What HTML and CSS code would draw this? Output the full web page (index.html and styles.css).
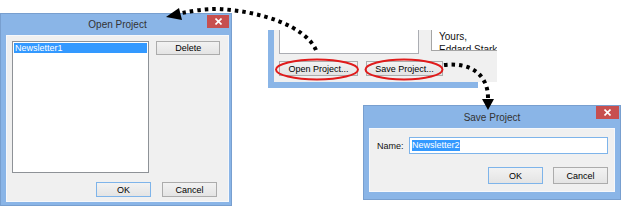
FILE: index.html
```html
<!DOCTYPE html>
<html>
<head>
<meta charset="utf-8">
<link rel="stylesheet" href="styles.css">
</head>
<body>
<div class="canvas">
  <section class="win win-open">
    <div class="titlebar">
      <span class="title">Open Project</span>
      <span class="close"><svg width="7" height="7" viewBox="0 0 7 7"><path d="M0.5 0.5 L6.5 6.5 M6.5 0.5 L0.5 6.5" stroke="#fff" stroke-width="1.6"/></svg></span>
    </div>
    <div class="client client-open">
      <div class="top-row">
        <div class="listbox"><div class="item selected">Newsletter1</div></div>
        <button class="btn btn-delete">Delete</button>
      </div>
      <div class="btn-row">
        <button class="btn btn-default">OK</button>
        <button class="btn">Cancel</button>
      </div>
    </div>
  </section>

  <section class="main-frag">
    <div class="frag-client">
      <div class="frag-top">
        <div class="frag-panel"></div>
        <div class="frag-letter">
          <div>Yours,</div>
          <div>Eddard Stark</div>
        </div>
      </div>
      <div class="frag-buttons">
        <button class="btn btn-open">Open Project...</button>
        <button class="btn btn-save">Save Project...</button>
      </div>
    </div>
  </section>

  <section class="win win-save">
    <div class="titlebar">
      <span class="title">Save Project</span>
      <span class="close"><svg width="7" height="7" viewBox="0 0 7 7"><path d="M0.5 0.5 L6.5 6.5 M6.5 0.5 L0.5 6.5" stroke="#fff" stroke-width="1.6"/></svg></span>
    </div>
    <div class="client client-save">
      <div class="name-row">
        <label class="name-label">Name:</label>
        <div class="textbox"><span class="sel-text">Newsletter2</span></div>
      </div>
      <div class="btn-row">
        <button class="btn btn-default">OK</button>
        <button class="btn">Cancel</button>
      </div>
    </div>
  </section>

  <svg class="overlay" width="624" height="210" viewBox="0 0 624 210">
    <ellipse cx="317" cy="69.5" rx="41" ry="10" fill="none" stroke="#e01b1b" stroke-width="2"/>
    <ellipse cx="404" cy="69.5" rx="38.5" ry="10" fill="none" stroke="#e01b1b" stroke-width="2"/>
    <path d="M316 50 C 306 27 262 11 218 9 C 203 9 192 11 182 13" fill="none" stroke="#000" stroke-width="4" stroke-dasharray="3.5 4"/>
    <polygon points="166,17 179,8 182,20" fill="#000"/>
    <path d="M444 65 C 470 62 488 74 488 98" fill="none" stroke="#000" stroke-width="4" stroke-dasharray="3.5 4"/>
    <polygon points="488,110 482,99 494,99" fill="#000"/>
  </svg>
</div>
</body>
</html>
```

FILE: styles.css
```css
html, body {
  margin: 0;
  padding: 0;
  background: #ffffff;
}

body {
  font-family: "Liberation Sans", Arial, sans-serif;
  font-size: 9px;
  color: #000;
}

.canvas {
  position: relative;
  width: 624px;
  height: 210px;
  overflow: hidden;
}

/* generic window */
.win {
  position: absolute;
  box-sizing: border-box;
  display: flex;
  flex-direction: column;
  background: #8ab5e7;
  border: 1px solid #789fcf;
}

.titlebar {
  position: relative;
  display: flex;
  align-items: center;
  justify-content: center;
  flex: none;
}

.title {
  font-size: 10px;
  color: #333;
}

.close {
  position: absolute;
  top: 1px;
  right: 0;
  width: 22px;
  height: 13px;
  background: #c74f4f;
  display: flex;
  align-items: center;
  justify-content: center;
}

.client {
  flex: 1;
  box-sizing: border-box;
  background: #f0f0f0;
  border: 1px solid #f6f8fb;
  display: flex;
  flex-direction: column;
}

/* open project dialog */
.win-open {
  left: 0;
  top: 13px;
  width: 232px;
  height: 193px;
  padding: 0 2px 3px 5px;
}

.win-open .titlebar {
  height: 21px;
}

.client-open {
  padding: 5px 8px 4px 5px;
}

.top-row {
  display: flex;
  align-items: flex-start;
  gap: 7px;
}

.listbox {
  box-sizing: border-box;
  width: 138px;
  height: 132px;
  background: #fff;
  border: 1px solid #8e9297;
  padding: 1px;
}

.item {
  height: 10px;
  line-height: 10px;
  padding-left: 1px;
}

.item.selected {
  background: #3399ff;
  color: #fff;
}

.btn {
  box-sizing: border-box;
  margin: 0;
  padding: 0;
  font-family: "Liberation Sans", Arial, sans-serif;
  font-size: 9px;
  color: #000;
  background: linear-gradient(#f2f2f2, #e4e4e4);
  border: 1px solid #acacac;
  border-radius: 0;
  display: flex;
  align-items: center;
  justify-content: center;
}

.btn-delete {
  width: 64px;
  height: 14px;
}

.btn-default {
  border-color: #7eb4ea;
}

.btn-row {
  margin-top: auto;
  display: flex;
  justify-content: flex-end;
}

.client-open .btn-row {
  gap: 11px;
  padding-right: 3px;
}

.client-open .btn-row .btn {
  width: 55px;
  height: 15px;
}

/* main window fragment */
.main-frag {
  position: absolute;
  left: 268px;
  top: 30px;
  width: 210px;
  height: 58px;
  box-sizing: border-box;
  background: #8ab5e7;
  padding: 0 0 6px 6px;
  display: flex;
}

.frag-client {
  flex: 1;
  background: #f0f0f0;
  display: flex;
  flex-direction: column;
}

.frag-top {
  display: flex;
  align-items: flex-start;
  padding-left: 5px;
}

.frag-panel {
  box-sizing: border-box;
  width: 140px;
  height: 24px;
  background: #fff;
  border: 1px solid #abadb3;
  border-top: none;
}

.frag-letter {
  box-sizing: border-box;
  margin-left: 12px;
  flex: 1;
  height: 21px;
  overflow: hidden;
  background: #fff;
  border-left: 1px solid #a5a5a5;
  border-bottom: 1px solid #a5a5a5;
  padding-left: 7px;
  font-size: 10px;
  line-height: 13px;
  color: #111;
  white-space: nowrap;
}

.frag-buttons {
  display: flex;
  gap: 8px;
  margin-top: 7px;
  padding-left: 5px;
}

.btn-open {
  width: 79px;
  height: 15px;
}

.btn-save {
  width: 77px;
  height: 15px;
}

/* save project dialog */
.win-save {
  left: 363px;
  top: 105px;
  width: 258px;
  height: 95px;
  padding: 0 5px 7px 5px;
}

.win-save .titlebar {
  height: 22px;
}

.win-save .close {
  top: 0;
  right: -4px;
  width: 23px;
}

.client-save {
  padding: 8px 6px 7px 7px;
}

.name-row {
  display: flex;
  align-items: center;
  gap: 5px;
}

.name-label {
  width: 27px;
  color: #111;
}

.textbox {
  box-sizing: border-box;
  width: 199px;
  height: 17px;
  background: #fff;
  border: 1px solid #7eb4ea;
  padding-left: 2px;
  display: flex;
  align-items: center;
}

.sel-text {
  background: #3399ff;
  color: #fff;
  line-height: 11px;
}

.client-save .btn-row {
  gap: 10px;
}

.client-save .btn-row .btn {
  width: 55px;
  height: 17px;
}

.overlay {
  position: absolute;
  left: 0;
  top: 0;
  pointer-events: none;
}
```
